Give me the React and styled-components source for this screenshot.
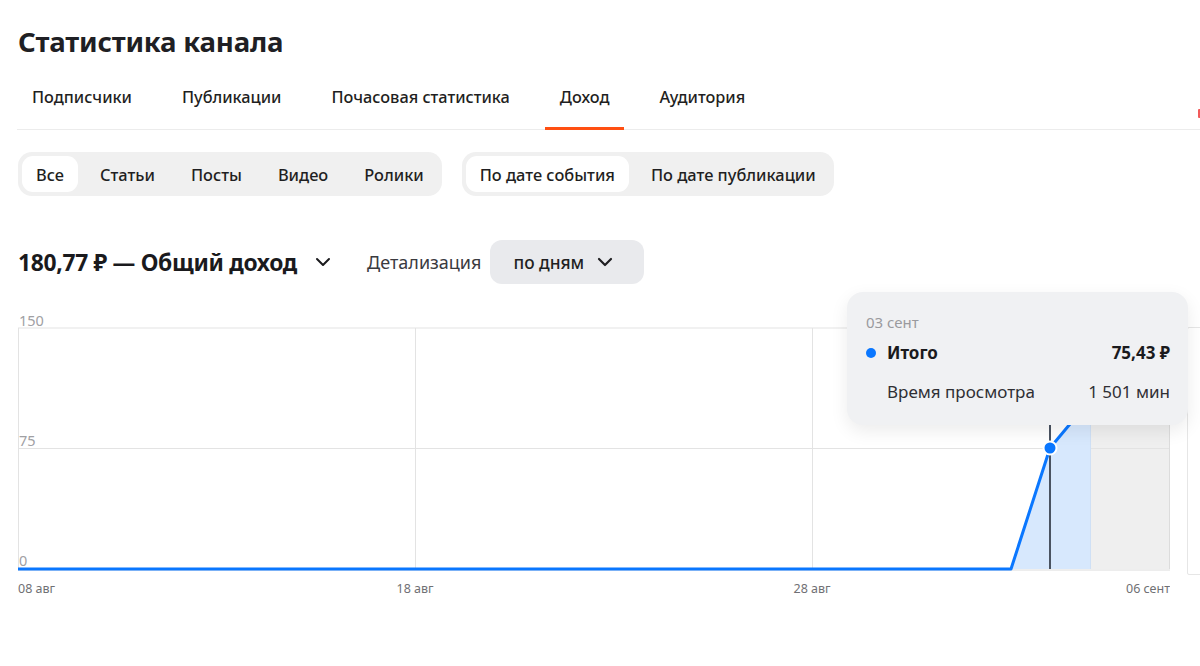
import React from 'react'
import styled, { createGlobalStyle } from 'styled-components'
import { ChevronDown } from 'lucide-react'

const GlobalStyle = createGlobalStyle`
    html, body {
        margin: 0;
        padding: 0;
        background: #ffffff;
        overflow: hidden;
    }
    body {
        font-family: "Noto Sans", "Open Sans", sans-serif;
        color: #1f1f22;
    }
`

const Page = styled.div`
    width: 1200px;
    height: 666px;
    overflow: hidden;
    padding-left: 18px;
    box-sizing: border-box;
`

const Title = styled.h1`
    margin: 0;
    padding-top: 22px;
    font-size: 27.6px;
    line-height: 38px;
    font-weight: 700;
    letter-spacing: -0.2px;
    color: #1f1f24;
`

const TabBar = styled.nav`
    display: flex;
    gap: 20px;
    margin-top: 10px;
    margin-left: -1px;
    border-bottom: 1px solid #ececec;
    width: 1300px;
    position: relative;
`

const Tab = styled.div`
    padding: 16px 15px 19px;
    font-size: 16.3px;
    line-height: 22px;
    font-weight: 500;
    color: #1f1f22;
    border-bottom: 3px solid ${p => (p.$active ? '#ff4f12' : 'transparent')};
    margin-bottom: -1px;
    white-space: nowrap;
`

const Badge = styled.span`
    position: absolute;
    left: 1181px;
    top: 39px;
    width: 3px;
    height: 9px;
    background: #f25a5a;
    border-radius: 1px;
`

const FilterRow = styled.div`
    display: flex;
    gap: 20px;
    margin-top: 22px;
`

const Segmented = styled.div`
    display: flex;
    gap: 8px;
    padding: 4px;
    background: #f0f0f0;
    border-radius: 14px;
`

const Segment = styled.div`
    padding: 0 14px;
    height: 36px;
    display: flex;
    align-items: center;
    border-radius: 11px;
    font-size: 16.4px;
    font-weight: 500;
    white-space: nowrap;
    background: ${p => (p.$active ? '#ffffff' : 'transparent')};
    color: #1f1f22;
`

const MetricRow = styled.div`
    display: flex;
    align-items: center;
    margin-top: 44px;
    height: 44px;
`

const Metric = styled.div`
    display: flex;
    align-items: center;
    gap: 14px;
    font-size: 22.8px;
    font-weight: 700;
    letter-spacing: -0.3px;
    color: #1a1a1d;
    margin-right: 32px;
`

const Label = styled.span`
    font-size: 18px;
    color: #3a3a3f;
    margin-right: 9px;
`

const Dropdown = styled.div`
    display: flex;
    align-items: center;
    gap: 9px;
    height: 44px;
    padding: 0 27px 0 23px;
    background: #e9eaed;
    border-radius: 12px;
    font-size: 17.3px;
    font-weight: 500;
    color: #1f1f22;
`

const ChartRow = styled.div`
    display: flex;
    gap: 17px;
    margin-top: 16px;
`

const ChartBox = styled.div`
    position: relative;
    width: 1152px;
    height: 300px;
    flex: none;
`

const SidePanel = styled.div`
    flex: none;
    width: 200px;
    height: 246px;
    margin-top: 27px;
    border: 1px solid #e6e6e6;
    border-radius: 2px;
`

const Tooltip = styled.div`
    position: absolute;
    left: 829px;
    top: -8px;
    width: 341px;
    height: 133px;
    box-sizing: border-box;
    padding: 19px 18px 0 19px;
    background: #f0f1f3;
    border-radius: 16px;
    box-shadow: 0 6px 18px rgba(0, 0, 0, 0.08);
`

const TipDate = styled.div`
    font-size: 15px;
    line-height: 22px;
    color: #9a9a9e;
`

const TipRow = styled.div`
    display: flex;
    align-items: center;
    justify-content: space-between;
    margin-top: ${p => p.$gap}px;
    font-size: 17px;
    line-height: 24px;
    font-weight: ${p => (p.$bold ? 700 : 400)};
    color: ${p => (p.$bold ? '#1a1a1d' : '#2f2f33')};
    padding-left: ${p => (p.$indent ? '21px' : '0')};
`

const TipName = styled.span`
    display: flex;
    align-items: center;
    gap: 11px;
`

const Dot = styled.span`
    width: 10px;
    height: 10px;
    border-radius: 50%;
    background: #0a77ff;
`

const Svg = styled.svg`
    display: block;
    font-family: "Noto Sans", "Open Sans", sans-serif;
`

const tabs = ['Подписчики', 'Публикации', 'Почасовая статистика', 'Доход', 'Аудитория']
const types = ['Все', 'Статьи', 'Посты', 'Видео', 'Ролики']
const dates = ['По дате события', 'По дате публикации']

function Chart() {
    const top = 28
    const bottom = 269
    const mid = 148.5
    return (
        <Svg width="1152" height="300" viewBox="0 0 1152 300">
            <rect x="1072" y={top} width="79" height={bottom - top} fill="#efefef" />
            <line x1="0" y1={top} x2="1152" y2={top} stroke="#e3e3e3" />
            <line x1="0" y1={mid} x2="1152" y2={mid} stroke="#e3e3e3" />
            <line x1="0.5" y1={top} x2="0.5" y2={bottom} stroke="#e3e3e3" />
            <line x1="397.5" y1={top} x2="397.5" y2={bottom} stroke="#e3e3e3" />
            <line x1="794.5" y1={top} x2="794.5" y2={bottom} stroke="#e3e3e3" />
            <line x1="1151.5" y1={top} x2="1151.5" y2={bottom} stroke="#dcdcdc" />
            <line x1="0" y1={bottom + 1} x2="1152" y2={bottom + 1} stroke="#dcdcdc" />
            <polygon points={`993,${bottom} 1032,148 1072,100 1072,${bottom}`} fill="#d7e8fd" />
            <line x1="1072.5" y1={top} x2="1072.5" y2={bottom} stroke="#cfe0f5" />
            <line x1="1032" y1="110" x2="1032" y2={bottom} stroke="#4a5361" strokeWidth="2" />
            <polyline
                points={`0,${bottom} 993,${bottom} 1032,148 1072,100`}
                fill="none"
                stroke="#0a77ff"
                strokeWidth="3"
                strokeLinejoin="round"
            />
            <circle cx="1032" cy="148" r="6.5" fill="#0a77ff" stroke="#ffffff" strokeWidth="2" />
            <text x="1" y="26" fontSize="14.5" fill="#a0a0a3">150</text>
            <text x="1" y="146" fontSize="14.5" fill="#a0a0a3">75</text>
            <text x="1" y="266" fontSize="14.5" fill="#a0a0a3">0</text>
            <text x="0" y="293" fontSize="12.5" fill="#707074">08 авг</text>
            <text x="397" y="293" fontSize="12.5" fill="#707074" textAnchor="middle">18 авг</text>
            <text x="794" y="293" fontSize="12.5" fill="#707074" textAnchor="middle">28 авг</text>
            <text x="1152" y="293" fontSize="12.5" fill="#707074" textAnchor="end">06 сент</text>
        </Svg>
    )
}

export default function App() {
    return (
        <Page>
            <GlobalStyle />
            <Title>Статистика канала</Title>
            <TabBar>
                {tabs.map(t => (
                    <Tab key={t} $active={t === 'Доход'}>{t}</Tab>
                ))}
                <Badge />
            </TabBar>
            <FilterRow>
                <Segmented>
                    {types.map(t => (
                        <Segment key={t} $active={t === 'Все'}>{t}</Segment>
                    ))}
                </Segmented>
                <Segmented>
                    {dates.map(t => (
                        <Segment key={t} $active={t === 'По дате события'}>{t}</Segment>
                    ))}
                </Segmented>
            </FilterRow>
            <MetricRow>
                <Metric>
                    180,77 ₽ — Общий доход
                    <ChevronDown size={24} strokeWidth={2} />
                </Metric>
                <Label>Детализация</Label>
                <Dropdown>
                    по дням
                    <ChevronDown size={24} strokeWidth={2.2} />
                </Dropdown>
            </MetricRow>
            <ChartRow>
                <ChartBox>
                    <Chart />
                    <Tooltip>
                        <TipDate>03 сент</TipDate>
                        <TipRow $bold $gap={8}>
                            <TipName><Dot />Итого</TipName>
                            <span>75,43 ₽</span>
                        </TipRow>
                        <TipRow $indent $gap={15}>
                            <span>Время просмотра</span>
                            <span>1 501 мин</span>
                        </TipRow>
                    </Tooltip>
                </ChartBox>
                <SidePanel />
            </ChartRow>
        </Page>
    )
}
